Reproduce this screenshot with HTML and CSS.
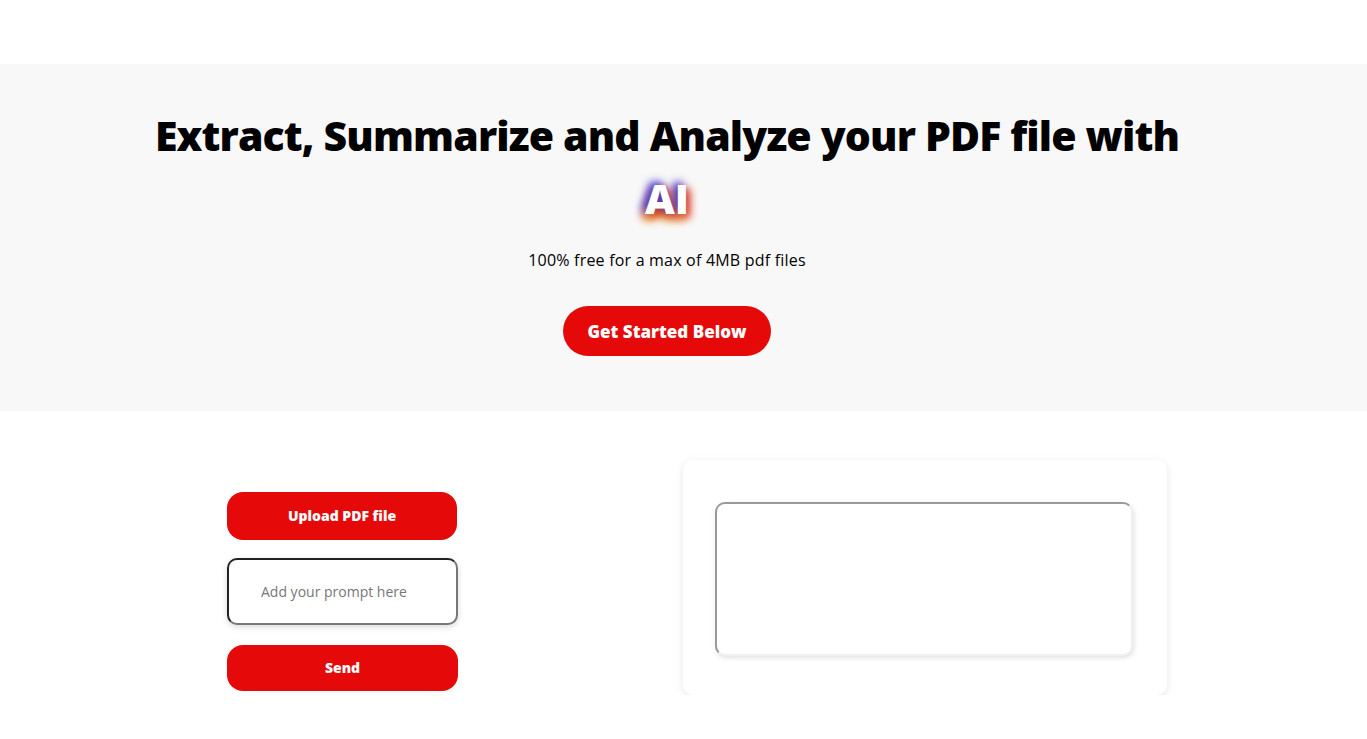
FILE: index.html
```html
<!DOCTYPE html>
<html lang="en">
<head>
<meta charset="utf-8">
<title>PDF AI</title>
<link rel="stylesheet" href="styles.css">
</head>
<body>
  <div class="topbar"></div>
  <section class="hero">
    <h1 class="hero-title">Extract, Summarize and Analyze your PDF file with <span class="ai">AI</span></h1>
    <p class="hero-sub">100% free for a max of 4MB pdf files</p>
    <button class="btn-start">Get Started Below</button>
  </section>
  <main class="workspace">
    <div class="controls">
      <button class="btn-red btn-upload">Upload PDF file</button>
      <input class="prompt" type="text" placeholder="Add your prompt here">
      <button class="btn-red btn-send">Send</button>
    </div>
    <div class="card">
      <textarea class="output"></textarea>
    </div>
  </main>
</body>
</html>
```

FILE: styles.css
```css
* { box-sizing: border-box; }
body {
  margin: 0;
  font-family: "Open Sans", "Liberation Sans", sans-serif;
  background: #fff;
  color: #000;
}
.topbar { height: 64px; background: #fff; }
.hero {
  background: #f8f8f8;
  padding: 40px 33px 55px 0;
  display: flex;
  flex-direction: column;
  align-items: center;
}
.hero-title {
  margin: 0;
  width: 1060px;
  text-align: center;
  font-size: 41px;
  line-height: 63px;
  font-weight: 800;
  letter-spacing: -0.85px;
}
.ai {
  color: #fff;
  letter-spacing: 0;
  text-shadow: -4px -3px 8px #3a36d8, 4px 4px 8px #e0301e, -2px 6px 10px #f0b000, -3px 3px 8px #c81c5c;
}
.hero-sub {
  margin: 18px 0 0;
  font-size: 16px;
  line-height: 24px;
  letter-spacing: 0.2px;
}
.btn-start {
  margin-top: 34px;
  width: 208px;
  height: 50px;
  border: none;
  border-radius: 25px;
  background: #e50909;
  color: #fff;
  font-family: inherit;
  font-size: 17px;
  font-weight: 800;
  line-height: 1;
  padding: 0;
}
.workspace {
  display: flex;
  gap: 225px;
  padding: 49px 0 0 227px;
}
.controls {
  width: 231px;
  margin-top: 32px;
  display: flex;
  flex-direction: column;
}
.btn-red {
  width: 230px;
  border: none;
  background: #e50909;
  color: #fff;
  font-family: inherit;
  font-size: 14px;
  font-weight: 800;
  border-radius: 16px;
  line-height: 1;
  padding: 0;
}
.btn-upload { height: 48px; }
.btn-send { height: 46px; margin-top: 20px; width: 231px; }
.prompt {
  margin-top: 18px;
  height: 67px;
  width: 231px;
  border: 2px solid;
  border-color: #222 #777 #777 #222;
  border-radius: 10px;
  padding: 0 0 0 32px;
  font-family: inherit;
  font-size: 14px;
  box-shadow: 0 2px 6px rgba(0,0,0,0.15);
  outline: none;
}
.prompt::placeholder { color: #777; }
.card {
  width: 484px;
  height: 235px;
  border-radius: 10px;
  background: #fff;
  box-shadow: 0 2px 8px rgba(0,0,0,0.1);
  padding: 42px 34px 0 32px;
}
.output {
  display: block;
  width: 418px;
  height: 154px;
  border: 2px solid;
  border-color: #999 #f0f0f0 #f0f0f0 #999;
  border-radius: 10px;
  box-shadow: 1px 2px 5px rgba(0,0,0,0.12);
  resize: none;
  outline: none;
}
```
